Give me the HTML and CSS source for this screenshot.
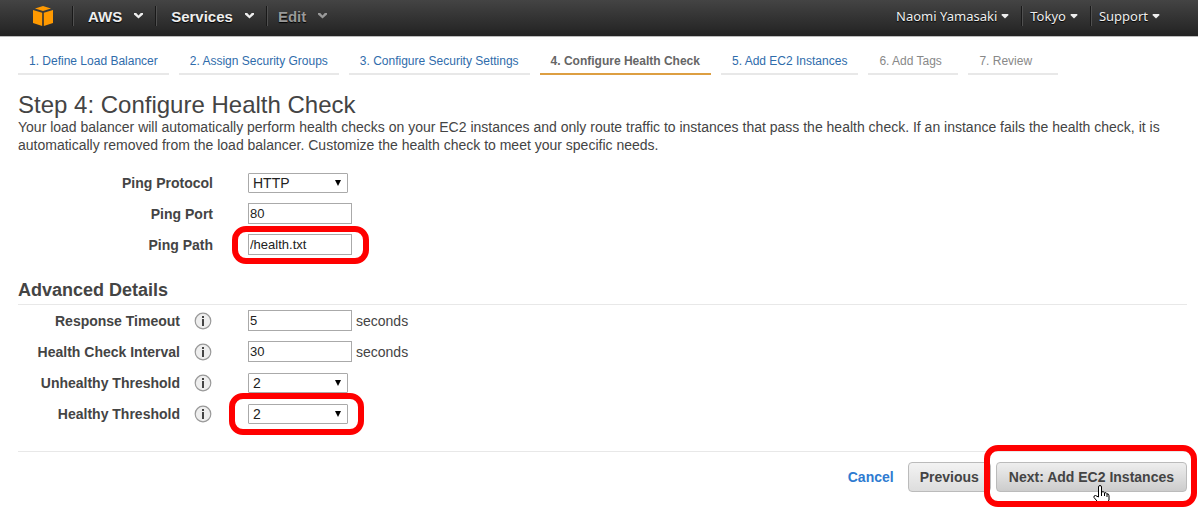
FILE: index.html
```html
<!DOCTYPE html>
<html lang="en">
<head>
<meta charset="utf-8">
<title>Step 4: Configure Health Check</title>
<link rel="stylesheet" href="styles.css">
</head>
<body>
<svg class="defs" aria-hidden="true">
  <symbol id="chevron" viewBox="0 0 9 6"><path d="M0 0h2.2L4.500 2.400 6.800 0H9v1.400L4.500 5.600 0 1.400z"/></symbol>
  <symbol id="caret" viewBox="0 0 8 5"><path d="M1 0h6l.6 1L4 4.500.4 1z"/></symbol>
  <symbol id="info" viewBox="0 0 18 18"><circle cx="9" cy="9" r="7.800" fill="#eee" stroke="#999" stroke-width="1.200"/><path fill="#444" d="M8 4h2v2H8zM8 7h2v7H8z"/></symbol>
</svg>
<header class="topbar">
  <nav class="menu" aria-label="Console">
    <a class="logo" href="#" aria-label="Home">
      <svg viewBox="0 0 20 20" width="20" height="20"><g fill="#f90"><path d="M10 0l8 2.600L10 5 2 2.600z"/><path d="M0 4l9.200 2.800V20L0 17z"/><path d="M20 4l-9.200 2.800V20L20 17z"/></g></svg>
    </a>
    <button class="item">AWS <svg class="chevron"><use href="#chevron"/></svg></button>
    <button class="item">Services <svg class="chevron"><use href="#chevron"/></svg></button>
    <button class="item edit">Edit <svg class="chevron"><use href="#chevron"/></svg></button>
  </nav>
  <nav class="account" aria-label="Account">
    <button class="small-item">Naomi Yamasaki <svg class="caret"><use href="#caret"/></svg></button>
    <button class="small-item">Tokyo <svg class="caret"><use href="#caret"/></svg></button>
    <button class="small-item">Support <svg class="caret"><use href="#caret"/></svg></button>
  </nav>
</header>
<main class="page">
  <nav class="steps" aria-label="Steps">
    <a class="step" href="#">1. Define Load Balancer</a>
    <a class="step" href="#">2. Assign Security Groups</a>
    <a class="step" href="#">3. Configure Security Settings</a>
    <a class="step current" href="#" aria-current="step">4. Configure Health Check</a>
    <a class="step" href="#">5. Add EC2 Instances</a>
    <span class="step pending">6. Add Tags</span>
    <span class="step pending">7. Review</span>
  </nav>
  <h1>Step 4: Configure Health Check</h1>
  <p class="intro">Your load balancer will automatically perform health checks on your EC2 instances and only route traffic to instances that pass the health check. If an instance fails the health check, it is automatically removed from the load balancer. Customize the health check to meet your specific needs.</p>
  <form>
    <div class="fields basic">
      <div class="row"><label for="protocol">Ping Protocol</label><span class="control drop"><select id="protocol"><option>HTTP</option></select></span></div>
      <div class="row"><label for="port">Ping Port</label><span class="control"><input id="port" type="text" value="80"></span></div>
      <div class="row"><label for="path">Ping Path</label><span class="control marked path"><input id="path" type="text" value="/health.txt"></span></div>
    </div>
    <h2>Advanced Details</h2>
    <div class="fields advanced">
      <div class="row"><label for="timeout">Response Timeout</label><svg class="info"><use href="#info"/></svg><span class="control"><input id="timeout" type="text" value="5"></span><span class="unit">seconds</span></div>
      <div class="row"><label for="interval">Health Check Interval</label><svg class="info"><use href="#info"/></svg><span class="control"><input id="interval" type="text" value="30"></span><span class="unit">seconds</span></div>
      <div class="row"><label for="unhealthy">Unhealthy Threshold</label><svg class="info"><use href="#info"/></svg><span class="control drop"><select id="unhealthy"><option>2</option></select></span></div>
      <div class="row"><label for="healthy">Healthy Threshold</label><svg class="info"><use href="#info"/></svg><span class="control drop marked threshold"><select id="healthy"><option>2</option></select></span></div>
    </div>
    <footer class="actions">
      <a class="cancel" href="#">Cancel</a>
      <button class="btn" type="button">Previous</button>
      <span class="marked next"><button class="btn active" type="button">Next: Add EC2 Instances</button>
        <svg class="pointer" viewBox="0 0 17 22" width="17" height="22"><path fill="#fff" stroke="#000" d="M5.500 12V2q0-1.500 1.500-1.500T8.500 2v5q2-1 3 .8 2-.6 2.500 1 2-.2 2 2V15l-2 3v3.500H6.500V19L1 12.500q-.6-2 1.500-2z"/><path stroke="#000" d="M8.500 7v4M11.500 8v3M14 9v3"/></svg>
      </span>
    </footer>
  </form>
</main>
</body>
</html>
```
FILE: styles.css
```css
* { box-sizing: border-box; }
body {
  margin: 0;
  background: #fff;
  color: #444;
  font: 14px/18px "Liberation Sans", Arial, sans-serif;
}
button, input, select { font-family: inherit; }
a { text-decoration: none; }
.defs { position: absolute; width: 0; height: 0; }

.topbar {
  display: flex;
  justify-content: space-between;
  height: 37px;
  padding: 0 30px 0 33px;
  background: linear-gradient(#444, #222);
  border-bottom: 1px solid #bbb;
}
.menu, .account { display: flex; padding: 6px 0 10px; }
.logo { width: 39px; height: 20px; }
.logo svg { display: block; }
.item, .small-item {
  display: flex;
  align-items: center;
  padding: 0 12px 0 15px;
  border: 0;
  border-left: 1px solid #191919;
  box-shadow: inset 1px 0 #505050;
  background: none;
  color: #eee;
  font-size: 15px;
  font-weight: bold;
  text-shadow: 0 1px 1px #000;
}
.item { gap: 12px; }
.item.edit { padding-left: 11px; color: #999; }
.small-item {
  gap: 4px;
  padding: 0 12px 0 8px;
  font: 13px/20px "Noto Sans", sans-serif;
}
.small-item:first-child { border-left: 0; box-shadow: none; }
.small-item:last-child { padding-right: 8px; }
.chevron { width: 9px; height: 6px; fill: currentColor; }
.caret { width: 8px; height: 5px; fill: currentColor; }

.page { padding: 15px 11px 19px 18px; }
.steps { display: flex; gap: 10px; }
.step {
  min-width: 90px;
  padding: 0 11px 3px;
  border-bottom: 2px solid #e8e8e8;
  color: #2f6cab;
  font-size: 12px;
  line-height: 18px;
  white-space: nowrap;
}
.step.current { border-color: #dd9f42; color: #666; font-weight: bold; }
.step.pending { color: #888; }
h1 { margin: 17px 0 0; font-size: 24px; font-weight: normal; line-height: 26px; }
.intro { margin: 0; }

.fields { display: flex; flex-direction: column; }
.basic { padding-top: 13px; }
.row { display: flex; align-items: center; height: 31px; }
.row label { font-weight: bold; text-align: right; }
.basic label { width: 195px; margin-right: 35px; }
.advanced label { width: 162px; margin-right: 14px; }
.info { width: 18px; height: 18px; margin-right: 36px; }
.control { display: flex; }
.unit { margin-left: 4px; }
input {
  width: 104px;
  height: 21px;
  padding: 1px;
  border: 1px solid #aaa;
  color: #222;
  font-size: 13px;
}
select {
  appearance: none;
  width: 100px;
  height: 20px;
  padding: 0 4px;
  border: 1px solid #aaa;
  border-radius: 1px;
  background: #fff;
  color: #222;
  font-size: 14px;
}
.drop { position: relative; }
.drop::before {
  content: "";
  position: absolute;
  top: 7px;
  right: 7px;
  border: solid transparent;
  border-width: 6px 3px 0;
  border-top-color: #000;
  pointer-events: none;
}
h2 {
  margin: 18px 0 0;
  padding-bottom: 2px;
  border-bottom: 1px solid #e8e8e8;
  font-size: 18px;
  line-height: 24px;
}

.marked { position: relative; }
.marked::after {
  content: "";
  position: absolute;
  border: 6px solid #f00;
  border-radius: 14px;
  pointer-events: none;
}
.path::after { inset: -8px -17px -9px -16px; }
.threshold::after { inset: -11px -16px -11px -19px; }
.next::after { inset: -17px -10px -15px -12px; }

.actions {
  display: flex;
  justify-content: flex-end;
  align-items: center;
  gap: 5px;
  margin-top: 22px;
  padding-top: 10px;
  border-top: 1px solid #e8e8e8;
}
.cancel { margin-right: 9px; color: #2e7bd1; font-weight: bold; }
.btn {
  display: block;
  height: 30px;
  padding: 0 11px;
  border: 1px solid #bbb;
  border-radius: 4px;
  background: linear-gradient(#f3f3f3, #ddd);
  color: #444;
  font-size: 14px;
  font-weight: bold;
}
.btn.active { padding: 0 12px; background: linear-gradient(#eee, #ccc); }
.pointer { position: absolute; top: 23px; left: 97px; }
```
